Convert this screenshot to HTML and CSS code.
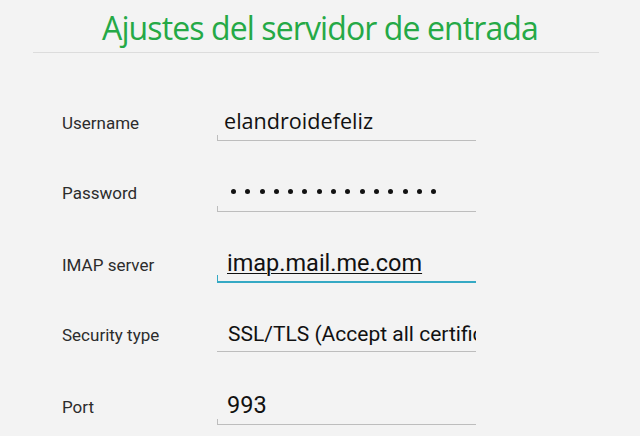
FILE: index.html
```html
<!DOCTYPE html>
<html>
<head>
<meta charset="utf-8">
<link rel="stylesheet" href="styles.css">
</head>
<body>
<header class="header">
  <h1 class="title">Ajustes del servidor de entrada</h1>
  <div class="divider"></div>
</header>
<main class="form">
  <div class="row">
    <span class="label">Username</span>
    <div class="field field-edit field-user">elandroidefeliz</div>
  </div>
  <div class="row">
    <span class="label">Password</span>
    <div class="field field-edit field-pass"><span class="dot"></span><span class="dot"></span><span class="dot"></span><span class="dot"></span><span class="dot"></span><span class="dot"></span><span class="dot"></span><span class="dot"></span><span class="dot"></span><span class="dot"></span><span class="dot"></span><span class="dot"></span><span class="dot"></span><span class="dot"></span><span class="dot"></span></div>
  </div>
  <div class="row">
    <span class="label">IMAP server</span>
    <div class="field field-edit field-focus field-big"><span class="spell">imap.mail.me.com</span></div>
  </div>
  <div class="row">
    <span class="label">Security type</span>
    <div class="field field-spinner">SSL/TLS (Accept all certificates)</div>
  </div>
  <div class="row">
    <span class="label">Port</span>
    <div class="field field-edit field-big">993</div>
  </div>
</main>
</body>
</html>
```

FILE: styles.css
```css
html, body {
  margin: 0;
  padding: 0;
}
body {
  width: 640px;
  height: 436px;
  overflow: hidden;
  background: #f3f3f3;
  font-family: Roboto, "Liberation Sans", sans-serif;
}
.header {
  height: 53px;
}
.title {
  box-sizing: border-box;
  margin: 0;
  height: 52px;
  padding-top: 4px;
  font-family: "Open Sans", sans-serif;
  font-weight: 400;
  font-size: 32px;
  letter-spacing: -0.9px;
  line-height: 48px;
  color: #25a946;
  text-align: center;
}
.divider {
  margin-left: 33px;
  width: 566px;
  height: 1px;
  background: #dcdcdc;
}
.form {
  padding-top: 20px;
}
.row {
  box-sizing: border-box;
  height: 71px;
  padding-top: 35px;
  padding-left: 62px;
  display: flex;
  align-items: baseline;
}
.label {
  width: 155px;
  font-size: 17px;
  line-height: 20px;
  color: #2c2c2c;
}
.field {
  position: relative;
  box-sizing: border-box;
  width: 259px;
  padding-left: 11px;
  padding-bottom: 6px;
  font-size: 21px;
  line-height: 26px;
  color: #111;
  border-bottom: 1px solid #bdbdbd;
  white-space: nowrap;
}
.field-big {
  font-size: 23.5px;
  padding-left: 10px;
}
.field-edit::before {
  content: "";
  position: absolute;
  left: 0;
  bottom: 0;
  width: 1px;
  height: 5px;
  background: #bdbdbd;
}
.field-user {
  font-family: "Open Sans", sans-serif;
  font-size: 21.6px;
  padding-left: 7px;
}
.field-pass {
  padding-left: 14px;
}
.dot {
  display: inline-block;
  width: 5px;
  height: 5px;
  border-radius: 50%;
  background: #111;
  margin-right: 9.3px;
  vertical-align: 5.5px;
}
.field-focus {
  border-bottom: 2px solid #35a9c4;
  padding-bottom: 5px;
}
.field-focus::before {
  background: #35a9c4;
  height: 6px;
}
.spell {
  text-decoration: underline;
  text-decoration-thickness: 1px;
  text-underline-offset: 2px;
}
.field-spinner {
  padding-bottom: 4px;
  overflow: hidden;
}
```
